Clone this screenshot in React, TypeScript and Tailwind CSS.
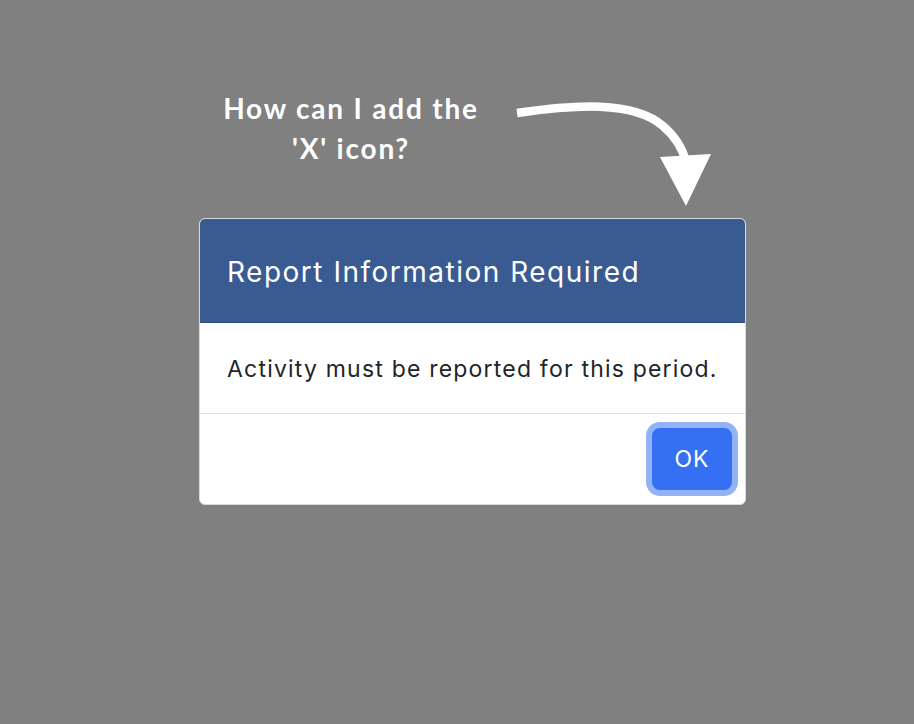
import React from "react";

export default function App() {
  return (
    <div className="min-h-[724px] w-full bg-[#808080] pt-[88px]">
      {/* annotation */}
      <div className="ml-[199px] flex w-[546px]">
        <div className="w-[304px] text-center font-['Lato',sans-serif] text-[28px] font-bold leading-[40px] tracking-[1.8px] text-white">
          How can I add the
          <br />
          'X' icon?
        </div>
        <svg width="242" height="130" viewBox="0 0 242 130" className="shrink-0">
          <path
            d="M14 25 C 70 17, 130 12, 160 38 C 174 50, 180 62, 183 74"
            fill="none"
            stroke="white"
            strokeWidth="8.5"
          />
          <path d="M157 69 L208 66 L183 118 Z" fill="white" />
        </svg>
      </div>

      {/* modal */}
      <div className="ml-[199px] w-[547px] overflow-hidden rounded-[6px] border border-[#d9d9d9] bg-white font-['Inter','Noto_Sans',sans-serif]">
        <div className="flex h-[104px] items-center border-b border-[#2f4f80] bg-[#395b91] px-[27px] pt-[2px]">
          <h5 className="whitespace-nowrap text-[28px] font-normal leading-none tracking-[1.5px] text-white">Report Information Required</h5>
        </div>
        <div className="flex h-[91px] items-center border-b border-[#e1e1e1] px-[27px] pt-[2px]">
          <p className="whitespace-nowrap text-[23px] leading-none tracking-[1.2px] text-[#212529]">Activity must be reported for this period.</p>
        </div>
        <div className="flex h-[90px] items-center justify-end pr-[13px]">
          <button className="flex h-[62px] w-[80px] items-center justify-center rounded-[8px] bg-[#346ff4] text-[23px] tracking-[1px] text-white shadow-[0_0_0_6px_#93b3f7]">
            OK
          </button>
        </div>
      </div>
    </div>
  );
}
